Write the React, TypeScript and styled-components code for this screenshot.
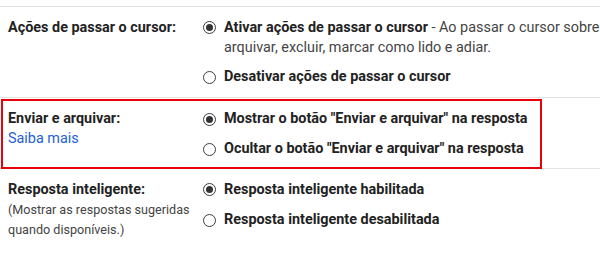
import React from "react";
import styled, { createGlobalStyle } from "styled-components";

const Global = createGlobalStyle`
  html, body { margin: 0; padding: 0; background: #fff; }
  body { font-family: Roboto, "Noto Sans", Arial, sans-serif; color: #202124; }
`;

const Page = styled.div`
  position: relative;
  width: 600px;
  height: 257px;
  overflow: hidden;
  padding-top: 6px;
  box-sizing: border-box;
`;

const Row = styled.div<{ $pt: number; $pb: number }>`
  display: grid;
  grid-template-columns: 203px 1fr;
  border-top: 1px solid #e3e3e3;
  padding: ${(p) => p.$pt}px 0 ${(p) => p.$pb}px 8px;
  &:last-child { border-bottom: 1px solid #e3e3e3; }
`;

const LabelCol = styled.div`
  display: flex;
  flex-direction: column;
`;

const Label = styled.div`
  font-size: 14.4px;
  font-weight: 700;
  line-height: 20px;
  color: #222;
  white-space: nowrap;
`;

const Link = styled.a`
  font-size: 14.4px;
  line-height: 20px;
  color: #1d5fd6;
  text-decoration: none;
`;

const Sub = styled.div`
  font-size: 12.6px;
  line-height: 19.5px;
  color: #444;
  margin-top: 0.5px;
  white-space: nowrap;
`;

const Options = styled.div<{ $gap: number }>`
  display: flex;
  flex-direction: column;
  gap: ${(p) => p.$gap}px;
  margin-left: -8px;
`;

const Option = styled.div`
  display: grid;
  grid-template-columns: 21px 1fr;
  align-items: start;
  font-size: 14.4px;
  line-height: 20px;
  color: #444;
`;

const Radio = styled.span<{ $on: boolean }>`
  width: 11px;
  height: 11px;
  margin-top: 3.5px;
  border: 1px solid #3c3c3c;
  border-radius: 50%;
  display: flex;
  align-items: center;
  justify-content: center;
  &::after {
    content: "";
    display: ${(p) => (p.$on ? "block" : "none")};
    width: 7px;
    height: 7px;
    border-radius: 50%;
    background: #333;
  }
`;

const OptText = styled.div`
  white-space: nowrap;
  b { font-weight: 700; color: #222; }
`;

const Highlight = styled.div`
  position: absolute;
  left: 1px;
  top: 99px;
  width: 537px;
  height: 66px;
  border: 2px solid #e8000b;
  pointer-events: none;
`;

export default function App() {
  return (
    <Page>
      <Global />
      <Row $pt={10.5} $pb={10}>
        <LabelCol>
          <Label>Ações de passar o cursor:</Label>
        </LabelCol>
        <Options $gap={9.5}>
          <Option>
            <Radio $on />
            <OptText>
              <b>Ativar ações de passar o cursor</b> - Ao passar o cursor sobre
              <br />
              arquivar, excluir, marcar como lido e adiar.
            </OptText>
          </Option>
          <Option>
            <Radio $on={false} />
            <OptText>
              <b>Desativar ações de passar o cursor</b>
            </OptText>
          </Option>
        </Options>
      </Row>
      <Row $pt={11} $pb={9}>
        <LabelCol>
          <Label>Enviar e arquivar:</Label>
          <Link href="#">Saiba mais</Link>
        </LabelCol>
        <Options $gap={10}>
          <Option>
            <Radio $on />
            <OptText>
              <b>Mostrar o botão "Enviar e arquivar" na resposta</b>
            </OptText>
          </Option>
          <Option>
            <Radio $on={false} />
            <OptText>
              <b>Ocultar o botão "Enviar e arquivar" na resposta</b>
            </OptText>
          </Option>
        </Options>
      </Row>
      <Row $pt={10.5} $pb={10}>
        <LabelCol>
          <Label>Resposta inteligente:</Label>
          <Sub>
            (Mostrar as respostas sugeridas
            <br />
            quando disponíveis.)
          </Sub>
        </LabelCol>
        <Options $gap={10.5}>
          <Option>
            <Radio $on />
            <OptText>
              <b>Resposta inteligente habilitada</b>
            </OptText>
          </Option>
          <Option>
            <Radio $on={false} />
            <OptText>
              <b>Resposta inteligente desabilitada</b>
            </OptText>
          </Option>
        </Options>
      </Row>
      <Highlight />
    </Page>
  );
}
